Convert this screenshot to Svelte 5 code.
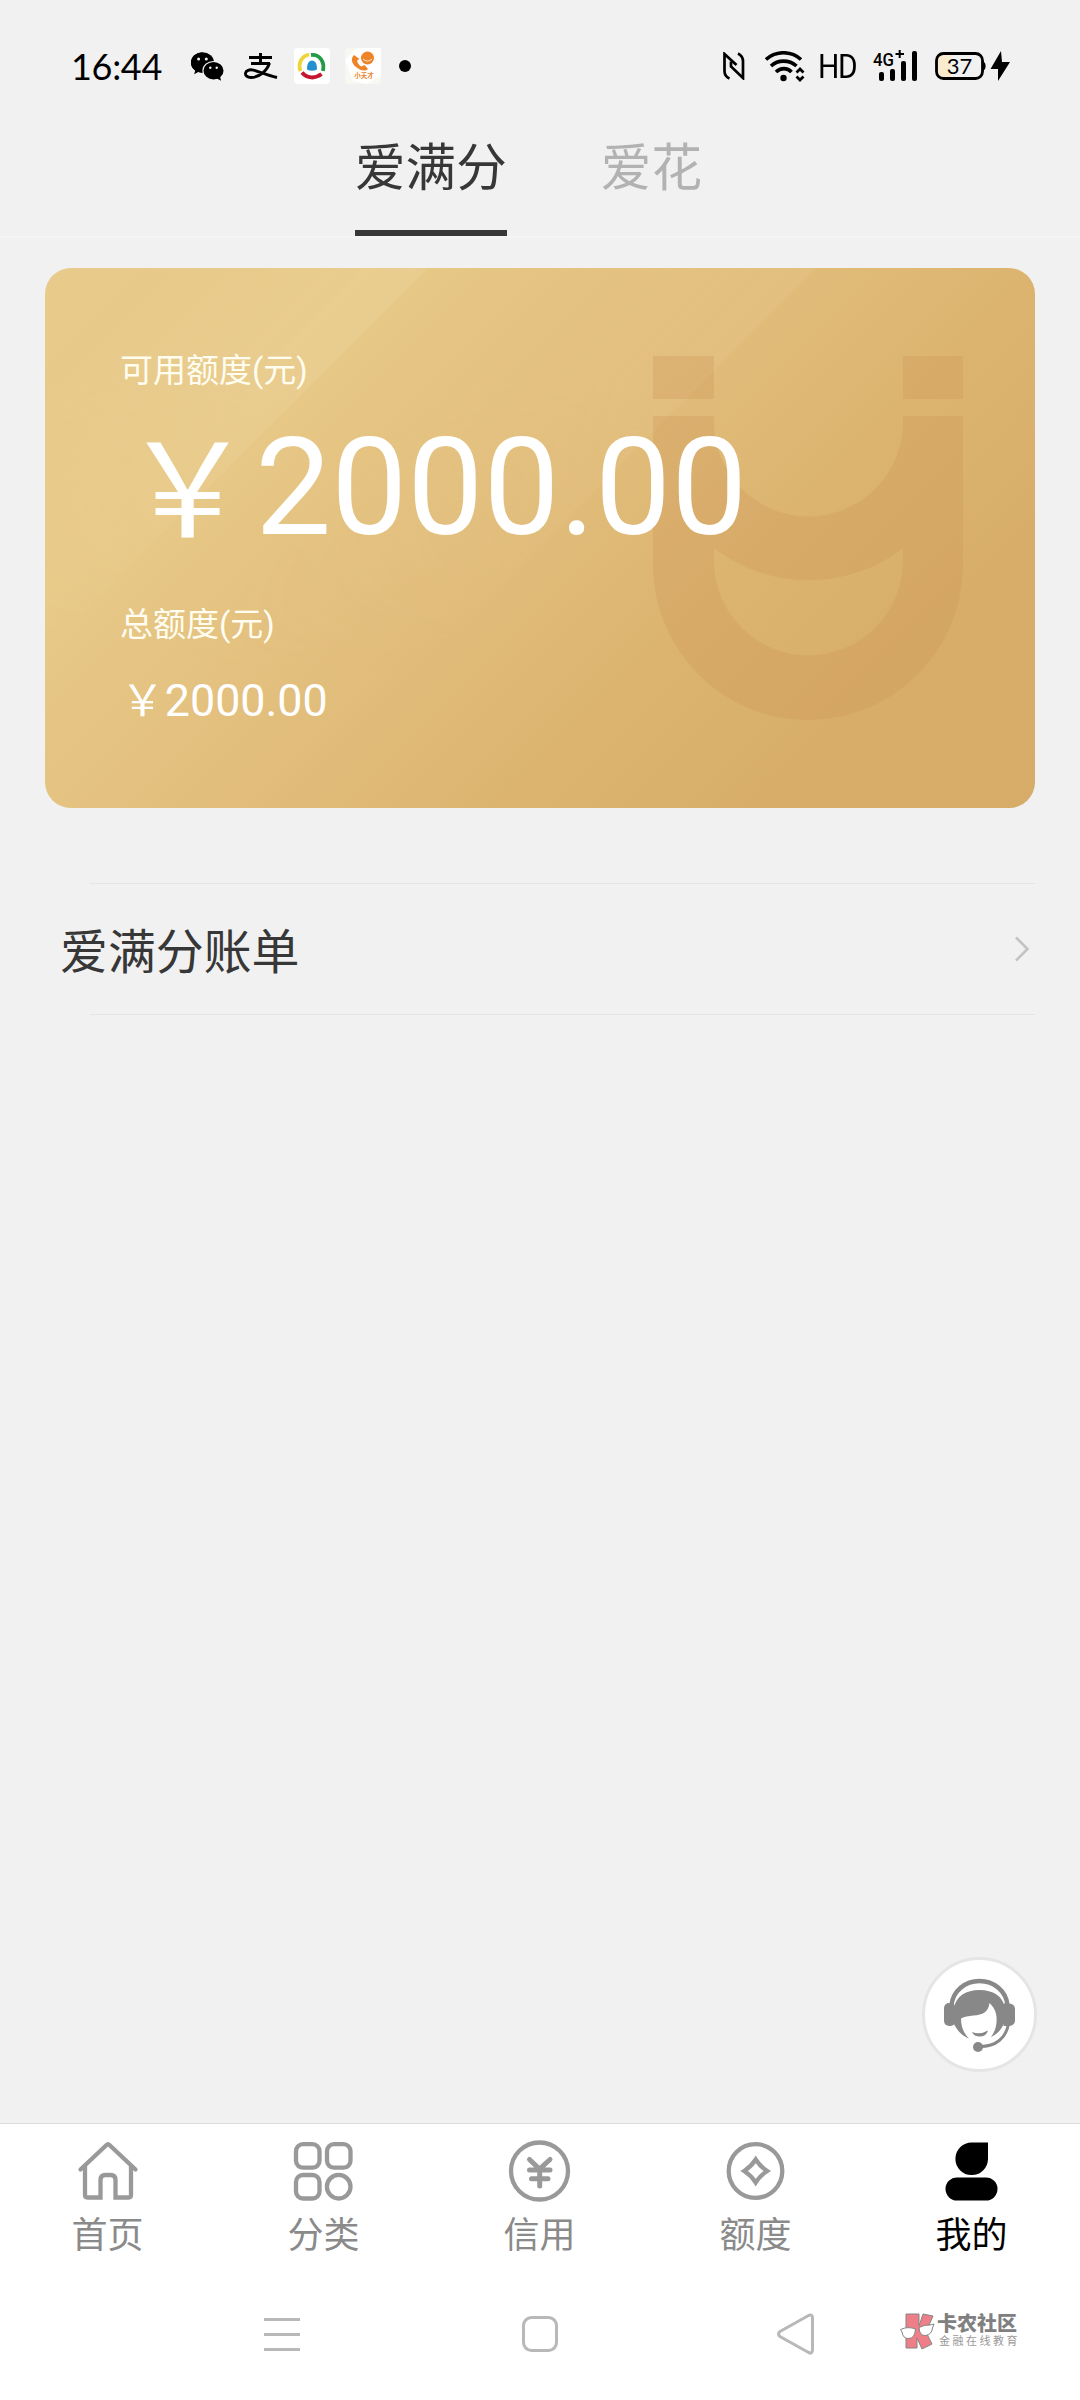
<script lang="ts">
	type NavItem = { id: string; label: string };

	const tabs: string[] = ['爱满分', '爱花'];
	const navItems: NavItem[] = [
		{ id: 'home', label: '首页' },
		{ id: 'category', label: '分类' },
		{ id: 'credit', label: '信用' },
		{ id: 'quota', label: '额度' },
		{ id: 'mine', label: '我的' }
	];

	let activeTab = $state(0);
	let activeNav = $state('mine');
</script>

<main class="page">
	<header class="status">
		<span class="time">16:44</span>
		<svg class="wechat" width="33" height="29" viewBox="0 0 33 29">
			<path d="M11.5 0.5C5 .5 0 5 0 10.7c0 3.2 1.6 6 4.2 7.900l-1 3.600 4-2.200c1.600.5 3 .7 4.700.7" />
			<ellipse cx="11.500" cy="10.500" rx="11.500" ry="10.200" />
			<ellipse cx="22.300" cy="18.500" rx="10.900" ry="9.600" fill="#f1f1f1" />
			<ellipse cx="22.500" cy="18.700" rx="10" ry="8.700" />
			<path d="M25 26l5 2.800-1-4.500z" />
			<g fill="#f1f1f1">
				<circle cx="7.600" cy="7" r="1.500" />
				<circle cx="15.300" cy="7" r="1.500" />
				<circle cx="19.300" cy="15.800" r="1.200" />
				<circle cx="25.700" cy="15.800" r="1.200" />
			</g>
		</svg>
		<svg class="alipay" width="34" height="27" viewBox="0 0 34 27" fill="none" stroke="#000" stroke-width="2.900">
			<path d="M5 4.500h23M16.500 0v11M7 10.500h19" />
			<path d="M25.500 10C23 18 15 24.500 7 24.500c-4 0-5.800-2-5.500-4.300.4-2.700 4-4 7.700-3.100C15 18.500 22 22 33 24.500" />
		</svg>
		<svg class="app" width="36" height="36" viewBox="0 0 36 36" fill="none">
			<rect width="36" height="36" rx="4" fill="#fff" />
			<path d="M6.500 23C3.500 15 8 8 15 6.500" stroke="#f0d435" stroke-width="3.800" />
			<path d="M17 7c8-1 14 6 12 16" stroke="#259b48" stroke-width="3.800" />
			<path d="M8 24.500c5 6 13 6.500 19.500 1.500" stroke="#c4162e" stroke-width="4" />
			<path d="M13 21.500c0-5.500 1.500-9 5-9s5 3.500 5 9q-5 2.500-10 0z" fill="#2590cf" />
		</svg>
		<svg class="app" width="36" height="36" viewBox="0 0 36 36">
			<rect width="36" height="36" rx="4" fill="#f8f7f2" />
			<path d="M0 12L12 0h24v28L22 36 8 33z" fill="#fff" />
			<circle cx="22.500" cy="10" r="6.500" fill="#ee8427" />
			<path d="M18 11q4.500 4 9 0" fill="none" stroke="#fff" stroke-width=".8" />
			<path d="M9 7c-3 3-3 8 2 12s9 4.500 12 2l-3.500-4-3 1.500c-2.500-1-4-3.500-4.500-6l2.500-1.500z" fill="#ee8427" />
			<text x="19" y="30" text-anchor="middle" font-size="6.500" font-weight="700" fill="#ee8427">小天才</text>
		</svg>
		<i class="dot"></i>

		<div class="indicators">
			<svg width="22" height="28" viewBox="0 0 22 28" fill="none" stroke="#000" stroke-width="2.700">
				<path d="M6.500 26.500Q1.500 24.500 1.500 19V2L13.500 13" />
				<path d="M15 1.500q5 2.500 5 8V26L8 14.500V9.500" />
			</svg>
			<svg class="wifi" width="40" height="31" viewBox="0 0 40 31" fill="none" stroke="#000" stroke-width="3.600">
				<path d="M1 8.500C11 -.5 26 -.5 36 8.500M6 15c7-6.500 18-6.500 25.500 0M11 21c4.500-4.500 11.500-4.500 15.500 0" />
				<circle cx="18.500" cy="27" r="3.200" fill="#000" stroke="none" />
				<path d="M31.500 21.500l3.500-3.500 3.500 3.500M31.500 25.500l3.500 3.500 3.500-3.500" stroke-width="2.800" />
			</svg>
			<span class="hd">HD</span>
			<svg class="signal" width="48" height="40" viewBox="-2 -4 48 40">
				<text x="0" y="15.500" font-size="18" font-weight="500" textLength="21" lengthAdjust="spacingAndGlyphs">4G</text>
				<path d="M22.500 4h8.500M26.700 0v8" stroke="#000" stroke-width="2" />
				<rect x="6" y="22" width="5" height="9" rx="2" />
				<rect x="17" y="19" width="5" height="12" rx="2" />
				<rect x="28" y="11" width="5" height="20" rx="2" />
				<rect x="39" y="1" width="5" height="30" rx="2" />
			</svg>
			<svg class="battery" width="76" height="30" viewBox="0 0 76 30">
				<path d="M16 3H8a6 6 0 0 0-6 6v12a6 6 0 0 0 6 6h8z" fill="#f9ebcd" />
				<rect x="1.500" y="2.500" width="46" height="25" rx="7" fill="none" stroke="#000" stroke-width="2.800" />
				<path d="M48 10c3.500 2 3.500 8 0 10z" />
				<text class="level" x="24.500" y="22.500" text-anchor="middle" font-size="22">37</text>
				<path d="M66 0L55.500 18h7.500v12L75 11h-8z" />
			</svg>
		</div>
	</header>

	<nav class="tabs">
		{#each tabs as tab, index}
			<button class="tab" class:active={index === activeTab} onclick={() => (activeTab = index)}>
				{tab}
			</button>
		{/each}
	</nav>

	<section class="card">
		<svg class="card-art" viewBox="0 0 990 540">
			<defs>
				<linearGradient id="shine-one" gradientUnits="userSpaceOnUse" x1="90" y1="0" x2="281" y2="191">
					<stop offset="0" stop-color="#eedda8" stop-opacity="0" />
					<stop offset="1" stop-color="#eedaa8" stop-opacity=".35" />
				</linearGradient>
				<linearGradient id="shine-two" gradientUnits="userSpaceOnUse" x1="490" y1="0" x2="631" y2="141">
					<stop offset="0" stop-color="#eccf98" stop-opacity="0" />
					<stop offset="1" stop-color="#eccf98" stop-opacity=".2" />
				</linearGradient>
				<linearGradient id="fade" x1="0" y1="0" x2="0" y2="1">
					<stop offset=".2" stop-color="#fff" />
					<stop offset=".75" stop-color="#000" />
				</linearGradient>
				<mask id="fade-down"><rect width="990" height="540" fill="url(#fade)" /></mask>
			</defs>
			<g mask="url(#fade-down)">
				<path d="M0 0H383L0 383z" fill="url(#shine-one)" />
				<path d="M383 0H772L232 540H0V383z" fill="url(#shine-two)" />
			</g>
			<g fill="#d0985a" fill-opacity=".34">
				<path d="M608 88h61v43h-61zM858 88h60v43h-60z" />
				<path
					fill-rule="evenodd"
					d="M608 148h61v6a94.500 94.500 0 0 0 189 0v-6h60v149a155 155 0 0 1-310 0zM669 280v13a94.500 94.500 0 0 0 189 0v-13c-55 43-134 43-189 0z"
				/>
			</g>
		</svg>
		<p class="label">可用额度(元)</p>
		<p class="amount"><span class="yen">￥</span>2000.00</p>
		<p class="label total-label">总额度(元)</p>
		<p class="total"><span class="yen">￥</span>2000.00</p>
	</section>

	<section class="list">
		<div class="row">
			<span>爱满分账单</span>
			<svg width="16" height="26" viewBox="0 0 16 26" fill="none" stroke="#c3c3c3" stroke-width="2.600">
				<path d="M2 1.500L13.500 13 2 24.500" />
			</svg>
		</div>
	</section>

	<button class="service" aria-label="客服">
		<svg width="72" height="74" viewBox="0 0 72 74" fill="#888">
			<path d="M7.500 27C9 13 21 3 35.500 3S62 13 63.500 27" fill="none" stroke="#888" stroke-width="4.500" />
			<path d="M10 30C12 18 22 12 35.500 12S59 18 61 30v12c-2 8-7 14-14 17 5-7 6-13 5.500-20-.5-6-3-10-7-14-1 9-7 12-16 12.500-5 .5-9 1-12.500 3 0 9 3 15 8 20C17 58 12 50 10 46z" />
			<rect x="0" y="25" width="11.500" height="23" rx="5" />
			<path d="M60 25.500h5.500a5.500 5.500 0 0 1 5.500 5.500v12a5.500 5.500 0 0 1-5.500 5h-6z" />
			<path d="M28 54q8 3 16-1.500-2 6-8 6t-8-4.500z" />
			<path d="M64.500 46C62 60 52 68.500 36 68.500" fill="none" stroke="#888" stroke-width="3" />
			<circle cx="34" cy="69" r="5" />
		</svg>
	</button>

	<footer class="footer">
		<nav class="bottom-nav">
			{#each navItems as item}
				<button class="nav-item" class:active={item.id === activeNav} onclick={() => (activeNav = item.id)}>
					<svg width="64" height="64" viewBox="0 0 64 64" fill="none" stroke="currentColor" stroke-width="4.300">
						{#if item.id === 'home'}
							<path d="M4.500 30.500L30.500 6q1.500-1.500 3 0l26 24.500" stroke-linecap="round" />
							<path d="M9 27v29q0 2.500 2.500 2.500h13V41q0-5 5-5h5q5 0 5 5v17.500h13q2.500 0 2.500-2.500V27" />
						{:else if item.id === 'category'}
							<rect x="4" y="5.200" width="23.500" height="23.500" rx="7" />
							<rect x="35" y="5.200" width="23.500" height="23.500" rx="7" />
							<rect x="4" y="36" width="23.500" height="23.500" rx="7" />
							<circle cx="46.700" cy="47.700" r="11.800" />
						{:else if item.id === 'credit'}
							<circle cx="31.500" cy="32" r="28.500" />
							<path
								d="M21.500 20.500l10 9.500 10.500-9.500M21.500 31h20.500M23.500 39.700h16.500M31.700 31v16"
								stroke-width="5"
								stroke-linecap="round"
							/>
						{:else if item.id === 'quota'}
							<circle cx="31.500" cy="32" r="26.800" />
							<path d="M31.700 20.500q4.500 7 11.500 11.500-7 4.500-11.500 11.500-4.500-7-11.500-11.500 7-4.500 11.500-11.500z" />
						{:else}
							<path d="M32 3.500h16V20A16.300 16.300 0 1 1 32 3.500z" fill="currentColor" stroke="none" />
							<rect x="5.500" y="38.500" width="52" height="23" rx="11.500" fill="currentColor" stroke="none" />
						{/if}
					</svg>
					<span>{item.label}</span>
				</button>
			{/each}
		</nav>

		<div class="system-nav">
			<svg width="36" height="40" viewBox="0 0 36 40" stroke="#b8b8b8" stroke-width="3">
				<path d="M0 5.500h36M0 20.500h36M0 35.500h36" />
			</svg>
			<svg class="sys-home" width="36" height="40" viewBox="0 0 36 40" fill="none" stroke="#b8b8b8" stroke-width="3">
				<rect x="1.500" y="3.500" width="33" height="33" rx="8" />
			</svg>
			<svg class="sys-back" width="38" height="42" viewBox="0 0 38 42" fill="none" stroke="#b8b8b8" stroke-width="3">
				<path d="M3 18.500L31.500 2.500Q35.500 1 35.500 5v32q0 4-4 2.500L3 23.500q-3-2.500 0-5z" />
			</svg>
			<div class="brand">
				<svg width="35" height="38" viewBox="0 0 35 38" stroke="#858585" stroke-width="1">
					<path d="M6 2h13v12l4-12 10 2-7 16 6 12-10 5-5-11v10H6z" fill="#ee7f88" />
					<path
						d="M.5 17.500Q8 14 15.500 17q-.5 9-6.500 9.500T2 20zM19 15.500q6-3 11-2.500l4-1-1.500 4q-1 7-7 7.500T19 15.500z"
						fill="#fff"
					/>
				</svg>
				<div class="brand-text">
					<strong>卡农社区</strong>
					<small>金融在线教育</small>
				</div>
			</div>
		</div>
	</footer>
</main>

<style>
	:global(body) {
		margin: 0;
		background: #f1f1f1;
	}

	.page {
		position: relative;
		display: flex;
		flex-direction: column;
		width: 1080px;
		height: 2400px;
		overflow: hidden;
		background: #f1f1f1;
		color: #373737;
		font-family: Roboto, 'Noto Sans CJK SC', sans-serif;
	}

	svg {
		display: block;
		flex: none;
	}

	p {
		margin: 0;
	}

	button {
		padding: 0;
		border: 0;
		background: none;
		font: inherit;
	}

	.status {
		display: flex;
		align-items: center;
		height: 132px;
		padding: 0 69px 0 71px;
		color: #000;
	}

	.time {
		width: 120px;
		font-family: Lato, sans-serif;
		font-size: 36px;
		letter-spacing: -0.300px;
		line-height: 40px;
	}

	.alipay {
		margin-left: 20px;
	}

	.app {
		margin-left: 16px;
	}

	.app + .app {
		margin-left: 15px;
	}

	.dot {
		width: 12px;
		height: 12px;
		margin-left: 18px;
		border-radius: 50%;
		background: #000;
	}

	.indicators {
		display: flex;
		align-items: center;
		margin-left: auto;
	}

	.wifi {
		margin-left: 20px;
	}

	.hd {
		width: 40px;
		margin-left: 13px;
		font-family: Roboto, sans-serif;
		font-size: 34px;
		letter-spacing: -1.500px;
		line-height: 40px;
		transform: scaleX(0.880);
		transform-origin: left;
	}

	.signal {
		margin-left: 13px;
	}

	.battery {
		margin-left: 16px;
	}

	.level {
		font-family: Lato, sans-serif;
	}

	.tabs {
		display: flex;
		justify-content: center;
		gap: 94px;
		height: 104px;
		padding-right: 23px;
		border-bottom: 2px solid #f5f5f5;
	}

	.tab {
		display: flex;
		box-sizing: border-box;
		height: 104px;
		border-bottom: 6px solid transparent;
		color: #b2b2b2;
		font-size: 50.600px;
		line-height: 73px;
	}

	.tab.active {
		border-bottom-color: #373737;
		color: #373737;
	}

	.card {
		position: relative;
		box-sizing: border-box;
		height: 540px;
		margin: 30px 45px 0;
		padding: 78px 75px 0;
		overflow: hidden;
		border-radius: 26px;
		background: linear-gradient(135deg, #e8ca8b 0%, #e8c988 22%, #e2be7c 45%, #dcb470 65%, #d7ad69 82%, #d6ac68 100%);
		color: #fff;
	}

	.card-art {
		position: absolute;
		inset: 0;
	}

	.label,
	.amount,
	.total {
		position: relative;
	}

	.label {
		color: #fffdf0;
		font-size: 33px;
		line-height: 49px;
	}

	.amount {
		height: 140px;
		margin-top: 22px;
		font-size: 135.300px;
		line-height: 142px;
	}

	.yen {
		display: inline-block;
		width: 1em;
		transform: scale(0.970, 0.960);
		transform-origin: 50% 80%;
	}

	.amount .yen {
		transform: translateY(3px) scale(0.970, 0.970);
	}

	.total-label {
		margin-top: 43px;
	}

	.total {
		margin-top: 22px;
		font-size: 44.800px;
		line-height: 60px;
	}

	.list {
		margin: 75px 45px 0;
	}

	.row {
		display: flex;
		align-items: center;
		justify-content: space-between;
		height: 130px;
		padding: 1px 5px 1px 15px;
		background:
			linear-gradient(#e5e5e5, #e5e5e5) 45px 0 / 100% 1px no-repeat,
			linear-gradient(#e5e5e5, #e5e5e5) 45px 100% / 100% 1px no-repeat;
		font-size: 47.900px;
	}

	.row span {
		padding-bottom: 3px;
	}

	.service {
		position: absolute;
		right: 43px;
		bottom: 328px;
		display: grid;
		place-content: center;
		box-sizing: border-box;
		width: 115px;
		height: 115px;
		border: 3px solid #e5e5e5;
		border-radius: 50%;
		background: #fff;
	}

	.footer {
		margin-top: auto;
		border-top: 1px solid #dcdcdc;
		background: #fff;
	}

	.bottom-nav {
		display: flex;
		height: 144px;
	}

	.nav-item {
		display: flex;
		flex: 1;
		flex-direction: column;
		align-items: center;
		gap: 9px;
		padding-top: 15px;
		color: #999;
		font-size: 36px;
		line-height: 48px;
	}

	.nav-item span {
		padding-right: 1px;
		color: #8a8a8a;
	}

	.nav-item.active,
	.nav-item.active span {
		color: #000;
	}

	.system-nav {
		display: flex;
		align-items: center;
		height: 132px;
		padding-left: 264px;
	}

	.sys-home {
		margin-left: 222px;
	}

	.sys-back {
		margin-left: 219px;
	}

	.brand {
		display: flex;
		align-items: center;
		gap: 2px;
		margin: -6px 0 0 85px;
		color: #808080;
	}

	.brand-text {
		display: flex;
		flex-direction: column;
	}

	.brand-text strong {
		font-size: 20px;
		font-weight: 900;
		line-height: 22px;
	}

	.brand-text small {
		padding-left: 2px;
		color: #999;
		font-size: 11px;
		letter-spacing: 2.500px;
		line-height: 14px;
	}
</style>
